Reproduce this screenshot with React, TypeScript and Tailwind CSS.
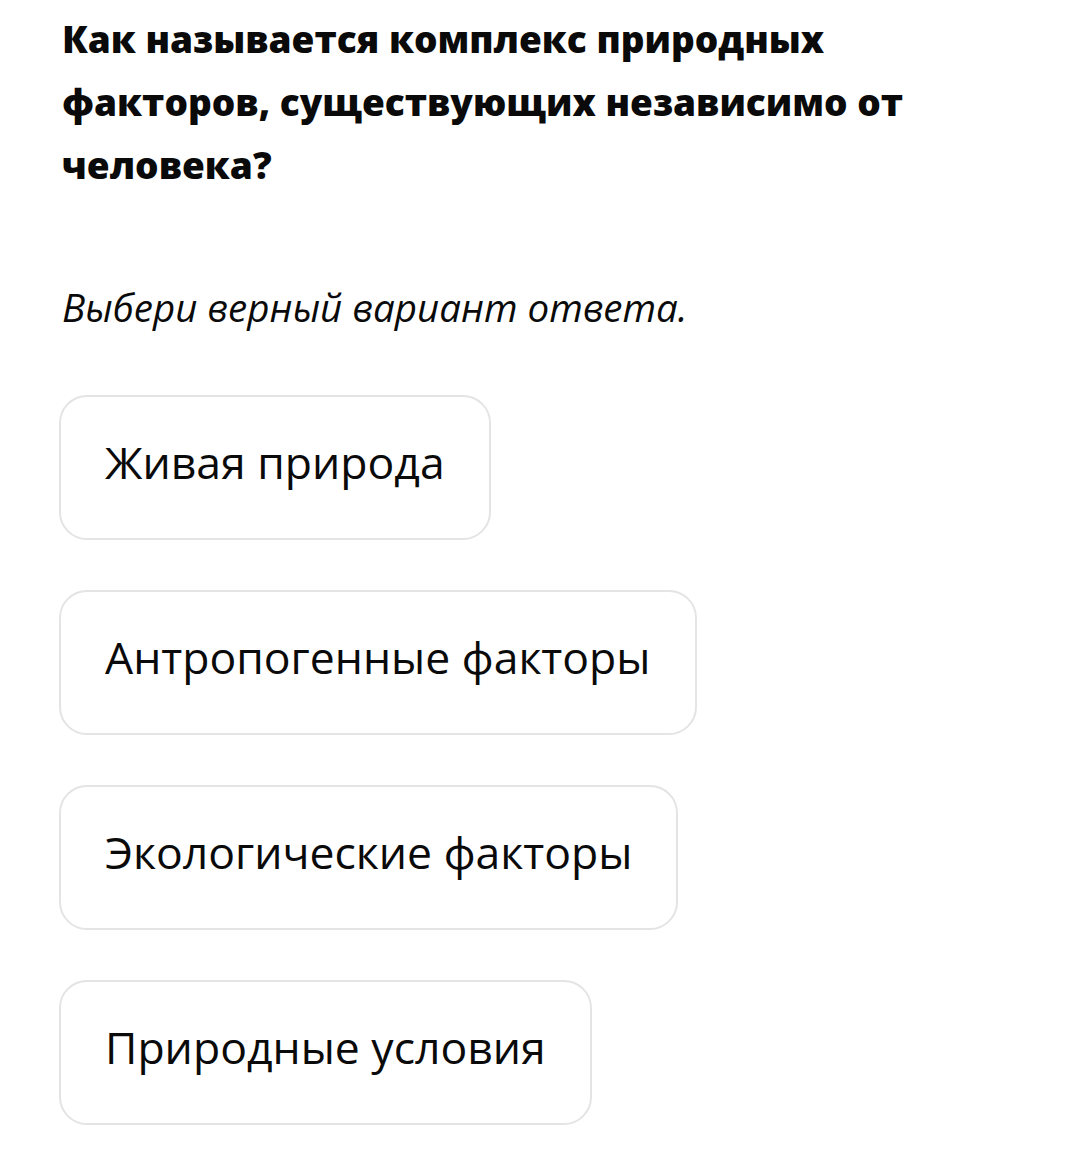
const options = [
  'Живая природа',
  'Антропогенные факторы',
  'Экологические факторы',
  'Природные условия',
];

export default function App() {
  return (
    <div
      className="min-h-[1158px] bg-white px-[62px] pt-[7px] text-[#0a0a0a]"
      style={{ fontFamily: '"Open Sans", "Noto Sans", sans-serif' }}
    >
      <h1 className="text-[37px] font-extrabold leading-[63px]">
        Как называется комплекс природных
        <br />
        факторов, существующих независимо от
        <br />
        человека?
      </h1>
      <p className="mt-[89px] text-[38.5px] italic leading-[44px]">Выбери верный вариант ответа.</p>
      <div className="mt-[66px] -ml-[3px] flex flex-col items-start gap-[50px]">
        {options.map((opt) => (
          <button
            key={opt}
            className="h-[145px] rounded-[28px] border-2 border-[#e4e4e4] bg-white px-[44px] pb-[10px] text-left text-[44.5px] leading-none"
          >
            {opt}
          </button>
        ))}
      </div>
    </div>
  );
}
